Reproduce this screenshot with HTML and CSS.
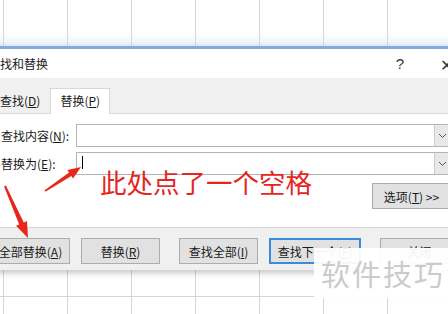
FILE: index.html
```html
<!DOCTYPE html>
<html lang="zh-CN">
<head>
    <meta charset="UTF-8">
    <title>查找和替换</title>
    <link rel="stylesheet" href="styles.css">
</head>
<body>
    <div class="page">
        <div class="sheet sheet-top"></div>

        <div class="dialog">
            <div class="titlebar">
                <span class="title">查找和替换</span>
                <span class="help">?</span>
                <span class="close">&#x2715;</span>
            </div>

            <div class="tabs">
                <div class="tab">查找(<u>D</u>)</div>
                <div class="tab active">替换(<u>P</u>)</div>
            </div>

            <div class="panel">
                <div class="row">
                    <label class="label">查找内容(<u>N</u>):</label>
                    <div class="combo">
                        <div class="combo-text"></div>
                        <div class="combo-btn">
                            <svg width="9" height="6" viewBox="0 0 9 6"><path d="M1 1 L4.5 4.5 L8 1" fill="none" stroke="#555" stroke-width="1"/></svg>
                        </div>
                    </div>
                </div>
                <div class="row">
                    <label class="label">替换为(<u>E</u>):</label>
                    <div class="combo">
                        <div class="combo-text"><span class="caret"></span></div>
                        <div class="combo-btn">
                            <svg width="9" height="6" viewBox="0 0 9 6"><path d="M1 1 L4.5 4.5 L8 1" fill="none" stroke="#555" stroke-width="1"/></svg>
                        </div>
                    </div>
                </div>
                <div class="options-row">
                    <button class="btn">选项(<u>T</u>) &gt;&gt;</button>
                </div>
            </div>

            <div class="actions">
                <button class="btn">全部替换(<u>A</u>)</button>
                <button class="btn">替换(<u>R</u>)</button>
                <button class="btn wide-gap">查找全部(<u>I</u>)</button>
                <button class="btn default">查找下一个(<u>F</u>)</button>
                <button class="btn wide-gap">关闭</button>
            </div>
        </div>

        <div class="sheet sheet-bottom"></div>

        <!-- annotations drawn over the screenshot -->
        <svg class="arrows" width="448" height="314" viewBox="0 0 448 314">
            <polygon points="45.4,191.7 71.3,175.9 73,178.4 81,167 67.4,170 69.1,172.5 44.6,190.3" fill="#e8261c"/>
            <polygon points="4.1,186.4 19.2,224.4 16,225.8 28,238 27,221 23.8,222.4 5.9,185.6" fill="#e8261c"/>
        </svg>
        <div class="note">此处点了一个空格</div>
        <div class="watermark">软件技巧</div>
    </div>
</body>
</html>
```

FILE: styles.css
```css
* {
    margin: 0;
    padding: 0;
    box-sizing: border-box;
}
body {
    font-family: "Noto Sans CJK SC", "Noto Sans", sans-serif;
    color: #1a1a1a;
}
.page {
    position: relative;
    width: 448px;
    height: 314px;
    overflow: hidden;
    background: #fff;
}
.sheet {
    background-image: repeating-linear-gradient(90deg, transparent 0 3px, #d6d6d6 3px 4px, transparent 4px 64px);
}
.sheet-top {
    height: 46px;
    background-image:
        repeating-linear-gradient(90deg, transparent 0 3px, #d6d6d6 3px 4px, transparent 4px 64px),
        linear-gradient(to bottom, #fff 75%, #e6eef8);
}
.sheet-bottom {
    height: 44px;
    background-image:
        linear-gradient(to bottom, transparent 26px, #d6d6d6 26px 27px, transparent 27px),
        repeating-linear-gradient(90deg, transparent 0 3px, #d6d6d6 3px 4px, transparent 4px 64px);
}

/* dialog */
.dialog {
    position: relative;
    margin-left: -20px;
    width: 480px;
    background: #f0f0f0;
    border-top: 3px solid #84acd9;
    box-shadow: 0 3px 6px rgba(0, 0, 0, 0.22);
}
.titlebar {
    height: 29px;
    background: #fff;
    display: flex;
    align-items: center;
    padding-left: 8px;
    font-size: 12px;
}
.title {
    flex: 1;
}
.help {
    font-family: "Liberation Sans", sans-serif;
    font-size: 15px;
    color: #333;
    margin-right: 36px;
}
.close {
    font-size: 16px;
    color: #333;
    width: 20px;
}
.tabs {
    height: 35px;
    display: flex;
    align-items: flex-end;
    padding-left: 10px;
}
.tab {
    height: 24px;
    padding: 0 10px;
    font-size: 12px;
    line-height: 24px;
}
.active {
    height: 26px;
    background: #fff;
    border: 1px solid #d9d9d9;
    border-bottom: none;
    margin-bottom: -1px;
    position: relative;
    padding: 0 9px;
}
.panel {
    height: 115px;
    background: #fff;
    border: 1px solid #d9d9d9;
    padding: 10px 8px 0 20px;
}
.row {
    display: flex;
    align-items: center;
    height: 23px;
    margin-bottom: 5px;
}
.label {
    width: 75px;
    font-size: 12px;
}
.combo {
    flex: 1;
    height: 23px;
    display: flex;
    border: 1px solid #b4b4b4;
    background: #fff;
}
.combo-text {
    flex: 1;
    padding: 3px 5px;
}
.caret {
    display: block;
    width: 1px;
    height: 13px;
    background: #000;
}
.combo-btn {
    width: 16px;
    background: #e8e8e8;
    border-left: 1px solid #ccc;
    display: flex;
    align-items: center;
    justify-content: center;
}
.options-row {
    display: flex;
    justify-content: flex-end;
    margin-top: 8px;
}
.btn {
    width: 79px;
    height: 26px;
    font-family: "Noto Sans CJK SC", "Noto Sans", sans-serif;
    font-size: 12px;
    color: #1a1a1a;
    background: #e1e1e1;
    border: 1px solid #adadad;
}
.actions {
    height: 42px;
    display: flex;
    gap: 11px;
    padding: 10px 0 0 11px;
}
.wide-gap {
    margin-left: 8px;
}
.default {
    width: 92px;
    border: 2px solid #3a8bd8;
}

/* overlays */
.arrows {
    position: absolute;
    left: 0;
    top: 0;
}
.note {
    position: absolute;
    left: 100px;
    top: 166px;
    font-size: 26.5px;
    line-height: 32px;
    color: #e5261f;
}
.watermark {
    position: absolute;
    left: 314px;
    top: 248px;
    width: 140px;
    height: 50px;
    background: rgba(255, 255, 255, 0.94);
    padding-left: 7px;
    font-size: 29px;
    line-height: 50px;
    letter-spacing: 2px;
    color: #cbcbcb;
}
```
